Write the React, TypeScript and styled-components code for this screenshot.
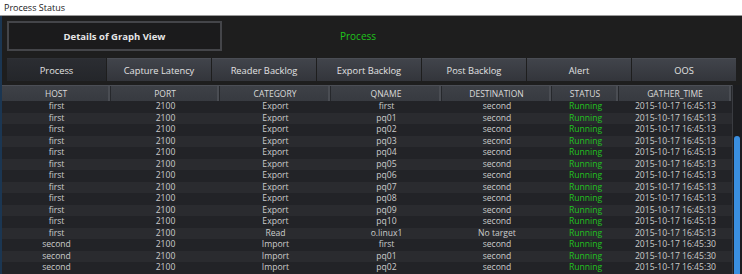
import styled, { createGlobalStyle } from "styled-components"

const GlobalStyle = createGlobalStyle`
  html, body {
    margin: 0;
    padding: 0;
    background: #1e1e1e;
  }
  body {
    font-family: "Open Sans", "Noto Sans", sans-serif;
  }
`

const Window = styled.div`
  width: 742px;
  height: 274px;
  overflow: hidden;
  display: flex;
  flex-direction: column;
  background: #1e1e1e;
`

const TitleBar = styled.div`
  height: 15px;
  flex: none;
  background: #ffffff;
  border-bottom: 1px solid #9a9a9a;
  color: #1a1a1a;
  font-size: 9px;
  line-height: 15px;
  padding-left: 4px;
`

const Body = styled.div`
  flex: 1;
  display: flex;
  flex-direction: column;
  border-left: 2px solid #1b3652;
  min-height: 0;
`

const TopRow = styled.div`
  display: flex;
  align-items: center;
  padding: 6px 0 0 5px;
  height: 28px;
`

const DetailsButton = styled.div`
  width: 211px;
  height: 26px;
  border: 2px solid #444549;
  background: #1b1b1c;
  color: #e6e6e6;
  font-weight: 700;
  font-size: 9.5px;
  display: flex;
  align-items: center;
  justify-content: center;
`

const Heading = styled.div`
  width: 272px;
  text-align: center;
  color: #1fc41c;
  font-size: 10px;
`

const Tabs = styled.div`
  display: grid;
  grid-template-columns: 99px repeat(6, 104px);
  column-gap: 1px;
  margin: 8px 0 0 5px;
  height: 23px;
`

const Tab = styled.div<{ $active?: boolean }>`
  display: flex;
  align-items: center;
  justify-content: center;
  font-size: 9.3px;
  color: #e2e2e2;
  border-top: 1px solid ${({ $active }) => ($active ? "#2e3035" : "#4a4d54")};
  background: ${({ $active }) =>
    $active
      ? "linear-gradient(#2b2d32, #24262a)"
      : "linear-gradient(#41444b, #33353b)"};
`

const TableArea = styled.div`
  margin-top: 4px;
  flex: 1;
  display: flex;
  min-height: 0;
`

const Table = styled.div`
  width: 730px;
  display: flex;
  flex-direction: column;
`

const Row = styled.div<{ $odd?: boolean }>`
  display: grid;
  grid-template-columns: 109px 109px 111px 111px 110px 67px 113px;
  height: 11.5px;
  background: ${({ $odd }) => ($odd ? "#2a2b2f" : "#222327")};
`

const HeaderRow = styled(Row)`
  height: 16px;
  background: linear-gradient(#3e4147, #373a40);
  border-top: 1px solid #4b4e55;
  box-sizing: border-box;
`

const HeadCell = styled.div`
  display: flex;
  align-items: center;
  justify-content: center;
  font-size: 8.5px;
  color: #dadada;
  border-right: 1px solid #26282c;
  box-shadow: inset -2px 0 0 #4a4d53;
`

const Cell = styled.div<{ $green?: boolean }>`
  display: flex;
  align-items: center;
  justify-content: center;
  font-size: 8.6px;
  line-height: 11.5px;
  color: ${({ $green }) => ($green ? "#22c41f" : "#cbcbcb")};
  white-space: nowrap;
`

const ScrollTrack = styled.div`
  width: 10px;
  flex: none;
  border-left: 1px solid #3a3c41;
  background: #1c1d20;
  display: flex;
  flex-direction: column;
  padding-top: 51px;
  box-sizing: border-box;
`

const Thumb = styled.div`
  flex: 1;
  width: 6px;
  margin-left: 1px;
  border-radius: 3px 3px 0 0;
  background: #3a8fe0;
`

const columns = ["HOST", "PORT", "CATEGORY", "QNAME", "DESTINATION", "STATUS", "GATHER_TIME"]

const tabs = ["Process", "Capture Latency", "Reader Backlog", "Export Backlog", "Post Backlog", "Alert", "OOS"]

const rows = [
  ["first", "2100", "Export", "first", "second", "16:45:13"],
  ["first", "2100", "Export", "pq01", "second", "16:45:13"],
  ["first", "2100", "Export", "pq02", "second", "16:45:13"],
  ["first", "2100", "Export", "pq03", "second", "16:45:13"],
  ["first", "2100", "Export", "pq04", "second", "16:45:13"],
  ["first", "2100", "Export", "pq05", "second", "16:45:13"],
  ["first", "2100", "Export", "pq06", "second", "16:45:13"],
  ["first", "2100", "Export", "pq07", "second", "16:45:13"],
  ["first", "2100", "Export", "pq08", "second", "16:45:13"],
  ["first", "2100", "Export", "pq09", "second", "16:45:13"],
  ["first", "2100", "Export", "pq10", "second", "16:45:13"],
  ["first", "2100", "Read", "o.linux1", "No target", "16:45:13"],
  ["second", "2100", "Import", "first", "second", "16:45:30"],
  ["second", "2100", "Import", "pq01", "second", "16:45:30"],
  ["second", "2100", "Import", "pq02", "second", "16:45:30"],
]

export default function App() {
  return (
    <>
      <GlobalStyle />
      <Window>
        <TitleBar>Process Status</TitleBar>
        <Body>
          <TopRow>
            <DetailsButton>Details of Graph View</DetailsButton>
            <Heading>Process</Heading>
          </TopRow>
          <Tabs>
            {tabs.map((t, i) => (
              <Tab key={t} $active={i === 0}>
                {t}
              </Tab>
            ))}
          </Tabs>
          <TableArea>
            <Table>
              <HeaderRow>
                {columns.map(c => (
                  <HeadCell key={c}>{c}</HeadCell>
                ))}
              </HeaderRow>
              {rows.map((r, i) => (
                <Row key={i} $odd={i % 2 === 1}>
                  <Cell>{r[0]}</Cell>
                  <Cell>{r[1]}</Cell>
                  <Cell>{r[2]}</Cell>
                  <Cell>{r[3]}</Cell>
                  <Cell>{r[4]}</Cell>
                  <Cell $green>Running</Cell>
                  <Cell>2015-10-17 {r[5]}</Cell>
                </Row>
              ))}
            </Table>
            <ScrollTrack>
              <Thumb />
            </ScrollTrack>
          </TableArea>
        </Body>
      </Window>
    </>
  )
}
